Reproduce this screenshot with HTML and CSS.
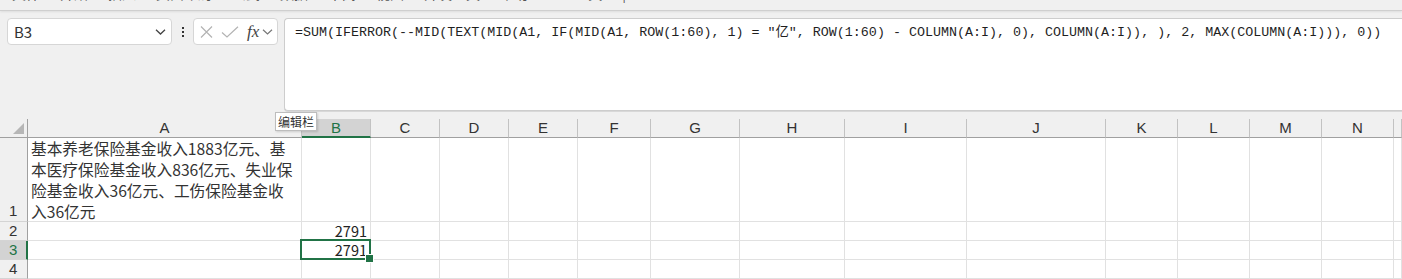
FILE: index.html
```html
<!DOCTYPE html>
<html lang="zh-CN">

<head>
    <meta charset="UTF-8">
    <title>B3 - 公式</title>
    <link rel="stylesheet" href="styles.css">
</head>

<body>

    <div class="ribbon">
        <span>文件</span><span>开始</span><span>插入</span><span>页面布局</span><span>公式</span><span>数据</span><span>审阅</span><span>视图</span><span>开发工具</span><span>帮助</span><span>PDF工具</span><span>|</span>
    </div>

    <div class="bar">
        <div class="namebox">
            <span>B3</span>
            <svg width="11" height="6" viewBox="0 0 11 6"><path d="M1 0.8 L5.5 5 L10 0.8" fill="none" stroke="#444" stroke-width="1.3"/></svg>
        </div>
        <div class="dots"><i></i><i></i><i></i></div>
        <div class="fxbox">
            <svg width="13" height="12" viewBox="0 0 13 12"><path d="M1 0.5 L12 11.5 M12 0.5 L1 11.5" stroke="#b3b3b3" stroke-width="1.2"/></svg>
            <svg width="18" height="12" viewBox="0 0 18 12"><path d="M1 6.5 L6 11 L17 0.8" fill="none" stroke="#b3b3b3" stroke-width="1.2"/></svg>
            <span class="fx">fx</span>
            <svg width="11" height="6" viewBox="0 0 11 6"><path d="M1 0.8 L5.5 5 L10 0.8" fill="none" stroke="#777" stroke-width="1.2"/></svg>
        </div>
        <div class="formula">=SUM(IFERROR(--MID(TEXT(MID(A1, IF(MID(A1, ROW(1:60), 1) = "亿", ROW(1:60) - COLUMN(A:I), 0), COLUMN(A:I)), ), 2, MAX(COLUMN(A:I))), 0))</div>
    </div>

    <div class="sheet">
        <div class="hd corner"><i></i></div>
        <div class="hd">A</div>
        <div class="hd sel">B</div>
        <div class="hd">C</div>
        <div class="hd">D</div>
        <div class="hd">E</div>
        <div class="hd">F</div>
        <div class="hd">G</div>
        <div class="hd">H</div>
        <div class="hd">I</div>
        <div class="hd">J</div>
        <div class="hd">K</div>
        <div class="hd">L</div>
        <div class="hd">M</div>
        <div class="hd">N</div>
        <div class="hd"></div>

        <div class="rh tall">1</div>
        <div class="c text">基本养老保险基金收入1883亿元、基<br>本医疗保险基金收入836亿元、失业保<br>险基金收入36亿元、工伤保险基金收<br>入36亿元</div>
        <div class="c"></div><div class="c"></div><div class="c"></div><div class="c"></div><div class="c"></div><div class="c"></div><div class="c"></div><div class="c"></div><div class="c"></div><div class="c"></div><div class="c"></div><div class="c"></div><div class="c"></div><div class="c"></div>

        <div class="rh">2</div>
        <div class="c"></div>
        <div class="c num">2791</div>
        <div class="c"></div><div class="c"></div><div class="c"></div><div class="c"></div><div class="c"></div><div class="c"></div><div class="c"></div><div class="c"></div><div class="c"></div><div class="c"></div><div class="c"></div><div class="c"></div><div class="c"></div>

        <div class="rh sel">3</div>
        <div class="c"></div>
        <div class="c num active">2791</div>
        <div class="c"></div><div class="c"></div><div class="c"></div><div class="c"></div><div class="c"></div><div class="c"></div><div class="c"></div><div class="c"></div><div class="c"></div><div class="c"></div><div class="c"></div><div class="c"></div><div class="c"></div>

        <div class="rh">4</div>
        <div class="c"></div><div class="c"></div><div class="c"></div><div class="c"></div><div class="c"></div><div class="c"></div><div class="c"></div><div class="c"></div><div class="c"></div><div class="c"></div><div class="c"></div><div class="c"></div><div class="c"></div><div class="c"></div><div class="c"></div>
    </div>

    <div class="tip">编辑栏</div>

</body>

</html>
```

FILE: styles.css
```css
* {
    margin: 0;
    box-sizing: border-box;
}

body {
    background-color: #f0f0f0;
    font-family: "Noto Sans CJK SC", "Liberation Sans", sans-serif;
    color: #222;
    overflow: hidden;
    position: relative;
}

/* bottom edge of the ribbon, mostly cut off */
.ribbon {
    height: 11px;
    overflow: hidden;
    border-bottom: 1px solid #cfcfcf;
    box-shadow: 0 1px 2px #dedede;
    display: flex;
    gap: 20px;
    padding-left: 12px;
    font-size: 14px;
    line-height: 14px;
    color: #555;
}

.ribbon span {
    margin-top: -14px;
}

.bar {
    display: flex;
    align-items: flex-start;
    padding: 7px 0 8px 7px;
}

.namebox {
    width: 165px;
    height: 27px;
    background-color: white;
    border: 1px solid #d6d6d6;
    border-radius: 4px;
    display: flex;
    align-items: center;
    justify-content: space-between;
    padding: 0 5px 0 6px;
    font-size: 15px;
    color: #333;
}

.dots {
    width: 21px;
    height: 27px;
    display: flex;
    flex-direction: column;
    align-items: center;
    justify-content: center;
    gap: 2px;
}

.dots i {
    width: 2px;
    height: 2px;
    background-color: #333;
}

.fxbox {
    width: 85px;
    height: 27px;
    background-color: white;
    border: 1px solid #d6d6d6;
    border-radius: 4px;
    display: flex;
    align-items: center;
    padding: 0 2px 0 6px;
    gap: 8px;
}

.fxbox .fx {
    font-family: "Liberation Serif", serif;
    font-style: italic;
    font-size: 17px;
    color: #444;
    margin-right: -5px;
}

.formula {
    flex: 1;
    height: 93px;
    margin-left: 6px;
    background-color: white;
    border: 1px solid #cdcdcd;
    border-right: none;
    border-radius: 4px 0 0 4px;
    box-shadow: 0 1px 0 #d8d8d8;
    padding: 5px 0 0 10px;
    font-family: "Liberation Mono", "Noto Sans CJK SC", monospace;
    font-size: 13.35px;
    line-height: 18px;
    color: #1f1f1f;
    white-space: nowrap;
}

.sheet {
    display: grid;
    grid-template-columns: 28px 274px 69px 69px 69px 69px 73px 89px 105px 122px 139px 72px 72px 72px 72px 1fr;
    grid-template-rows: 19px 84px 19px 19px 19px;
    background-color: white;
}

.hd {
    background-color: #f0f0f0;
    border-right: 1px solid #c2c2c2;
    border-bottom: 1px solid #a0a0a0;
    font-family: "Liberation Sans", sans-serif;
    font-size: 15px;
    line-height: 18px;
    text-align: center;
    color: #333;
}

.hd.sel {
    background-color: #d3d3d3;
    border-bottom: 2px solid #217346;
    color: #217346;
}

.corner {
    position: relative;
    border-right-color: #a0a0a0;
}

.corner i {
    position: absolute;
    right: 3px;
    bottom: 3px;
    width: 0;
    height: 0;
    border-left: 11px solid transparent;
    border-bottom: 11px solid #b6b6b6;
}

.rh {
    background-color: #f0f0f0;
    border-right: 1px solid #a0a0a0;
    border-bottom: 1px solid #d4d4d4;
    font-family: "Liberation Sans", sans-serif;
    font-size: 15px;
    line-height: 18px;
    padding-left: 9px;
    color: #333;
}

.rh.tall {
    display: flex;
    align-items: flex-end;
    padding-bottom: 1px;
}

.rh.sel {
    background-color: #d3d3d3;
    border-right: 2px solid #217346;
    color: #217346;
}

.c {
    border-right: 1px solid #e1e1e1;
    border-bottom: 1px solid #e1e1e1;
}

.c.text {
    font-size: 15.7px;
    line-height: 21px;
    padding-left: 3px;
    white-space: nowrap;
    color: #333;
}

.c.num {
    font-size: 14.5px;
    line-height: 18px;
    text-align: right;
    padding-right: 3px;
    color: #222;
}

.c.active {
    position: relative;
}

.c.active::after {
    content: "";
    position: absolute;
    top: -2px;
    left: -2px;
    right: -1px;
    bottom: -1px;
    border: 2px solid #217346;
}

.c.active::before {
    content: "";
    position: absolute;
    right: -4px;
    bottom: -4px;
    width: 7px;
    height: 7px;
    background-color: #217346;
    border: 1px solid white;
    z-index: 1;
}

.tip {
    position: absolute;
    left: 275px;
    top: 112px;
    height: 19px;
    padding: 0 2px;
    background-color: white;
    border: 1px solid #bdbdbd;
    box-shadow: 1px 1px 2px rgba(0, 0, 0, 0.15);
    font-size: 12px;
    line-height: 17px;
    color: #333;
}
```
